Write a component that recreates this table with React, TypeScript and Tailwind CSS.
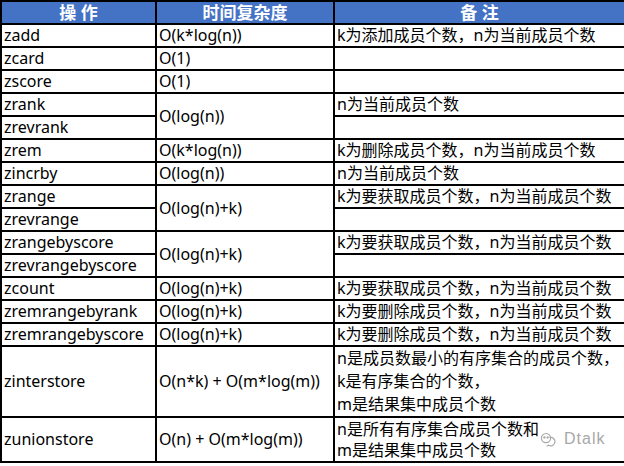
const font = {
  fontFamily: '"Noto Sans", "Noto Sans CJK SC", sans-serif',
};

type Row = {
  op: string;
  cx?: string;
  cxSpan?: number;
  note?: string;
};

const rows: Row[] = [
  { op: "zadd", cx: "O(k*log(n))", note: "k为添加成员个数，n为当前成员个数" },
  { op: "zcard", cx: "O(1)", note: "" },
  { op: "zscore", cx: "O(1)", note: "" },
  { op: "zrank", cx: "O(log(n))", cxSpan: 2, note: "n为当前成员个数" },
  { op: "zrevrank", note: "" },
  { op: "zrem", cx: "O(k*log(n))", note: "k为删除成员个数，n为当前成员个数" },
  { op: "zincrby", cx: "O(log(n))", note: "n为当前成员个数" },
  { op: "zrange", cx: "O(log(n)+k)", cxSpan: 2, note: "k为要获取成员个数，n为当前成员个数" },
  { op: "zrevrange", note: "" },
  { op: "zrangebyscore", cx: "O(log(n)+k)", cxSpan: 2, note: "k为要获取成员个数，n为当前成员个数" },
  { op: "zrevrangebyscore", note: "" },
  { op: "zcount", cx: "O(log(n)+k)", note: "k为要获取成员个数，n为当前成员个数" },
  { op: "zremrangebyrank", cx: "O(log(n)+k)", note: "k为要删除成员个数，n为当前成员个数" },
  { op: "zremrangebyscore", cx: "O(log(n)+k)", note: "k为要删除成员个数，n为当前成员个数" },
];

const td = "border-2 border-black px-[2px] h-[23px] leading-[21px] align-middle whitespace-nowrap";

export default function App() {
  return (
    <div className="relative w-[624px] h-[466px] bg-white text-black text-[16px]" style={font}>
      <table className="border-collapse table-fixed w-[624px]">
        <colgroup>
          <col className="w-[155px]" />
          <col className="w-[178px]" />
          <col className="w-[291px]" />
        </colgroup>
        <thead>
          <tr className="bg-[#4472c4] text-white font-bold">
            <th className={td + " text-center text-[17px]"}>操 作</th>
            <th className={td + " text-center text-[17px]"}>时间复杂度</th>
            <th className={td + " text-center text-[17px]"}>备 注</th>
          </tr>
        </thead>
        <tbody>
          {rows.map((r) => (
            <tr key={r.op}>
              <td className={td}>{r.op}</td>
              {r.cx !== undefined && (
                <td className={td} rowSpan={r.cxSpan ?? 1}>
                  {r.cx}
                </td>
              )}
              <td className={td}>{r.note}</td>
            </tr>
          ))}
          <tr>
            <td className={td + " h-[71px]"}>zinterstore</td>
            <td className={td}>O(n*k) + O(m*log(m))</td>
            <td className={td + " leading-[23px]"}>
              n是成员数最小的有序集合的成员个数，
              <br />
              k是有序集合的个数，
              <br />
              m是结果集中成员个数
            </td>
          </tr>
          <tr>
            <td className={td + " h-[45px]"}>zunionstore</td>
            <td className={td}>O(n) + O(m*log(m))</td>
            <td className={td + " leading-[21px]"}>
              n是所有有序集合成员个数和
              <br />
              m是结果集中成员个数
            </td>
          </tr>
        </tbody>
      </table>

      {/* watermark */}
      <div className="absolute left-[540px] top-[431px] flex items-center gap-[8px] text-[#a8a8a8]">
        <svg width="16" height="15" viewBox="0 0 16 15" fill="none" stroke="currentColor" strokeWidth="1.2">
          <path d="M6 1.5a4.6 4.6 0 1 0 0 9.2 4.6 4.6 0 0 0 0-9.2z" />
          <path d="M9.6 5.6a4.2 4.2 0 1 1 -1 7.6l-2 1" />
          <circle cx="4.4" cy="5.4" r="0.6" fill="currentColor" />
          <circle cx="7.6" cy="5.4" r="0.6" fill="currentColor" />
        </svg>
        <span className="text-[16px] leading-none tracking-[1px]" style={{ fontFamily: '"Liberation Sans", sans-serif' }}>
          Dtalk
        </span>
      </div>
    </div>
  );
}
